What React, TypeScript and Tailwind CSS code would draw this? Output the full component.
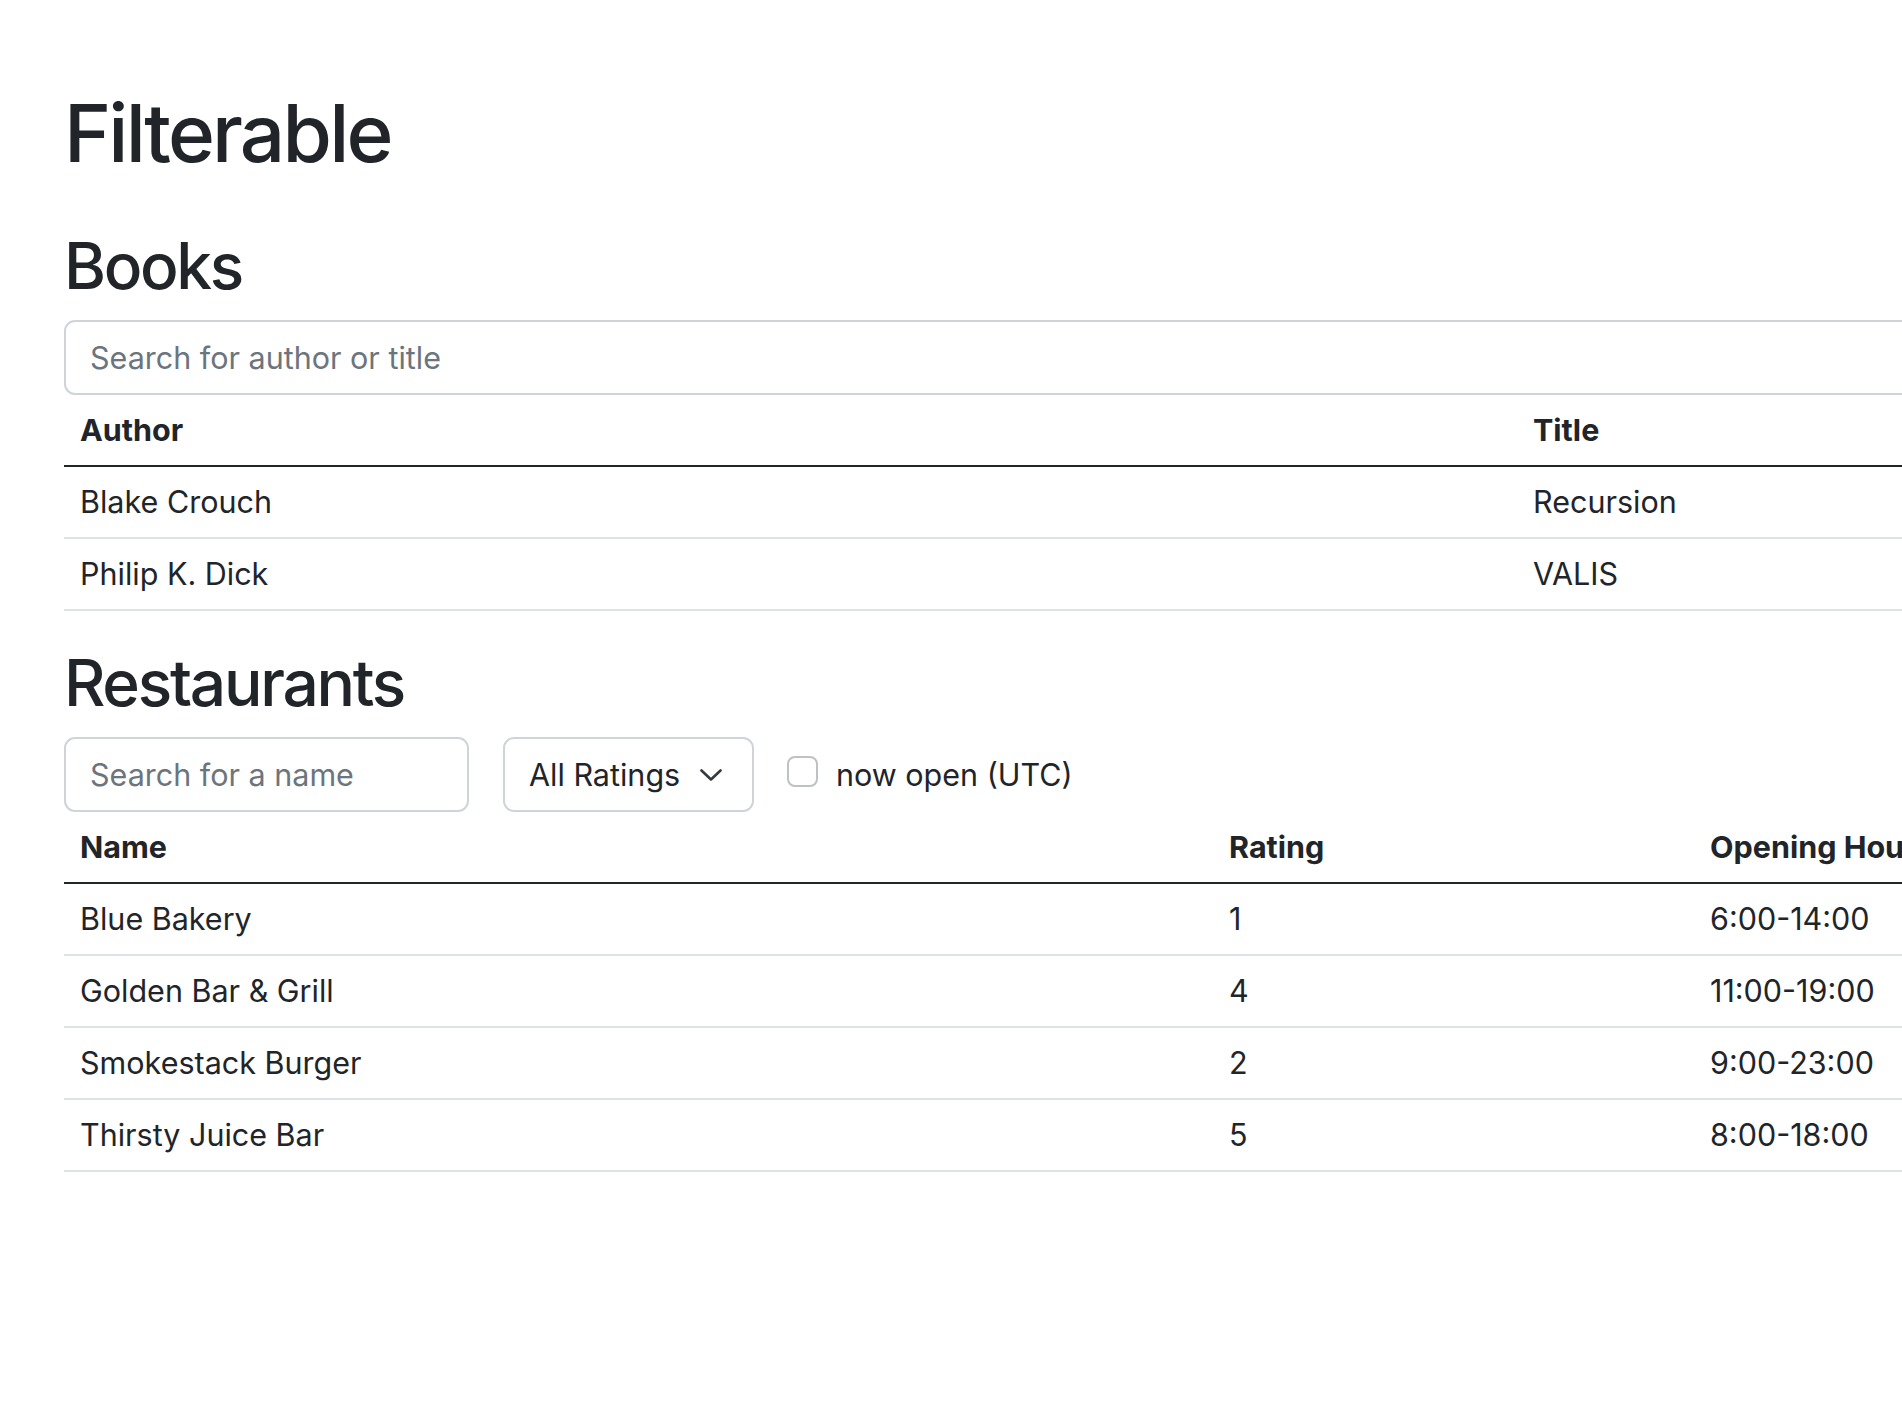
import React, { useState } from 'react';

// Book + restaurant data shown in the filterable tables
const books = [
    { author: 'Blake Crouch', title: 'Recursion' },
    { author: 'Philip K. Dick', title: 'VALIS' },
];

const restaurants = [
    { name: 'Blue Bakery', rating: 1, hours: '6:00-14:00' },
    { name: 'Golden Bar & Grill', rating: 4, hours: '11:00-19:00' },
    { name: 'Smokestack Burger', rating: 2, hours: '9:00-23:00' },
    { name: 'Thirsty Juice Bar', rating: 5, hours: '8:00-18:00' },
];

const thClass = 'text-left font-bold px-4 py-[11px] leading-[48px] border-b-2 border-[#212529]';
const tdClass = 'text-left px-4 py-[11px] leading-[48px] border-b-2 border-[#dee2e6]';

const Chevron: React.FC = () => (
    <svg width="22" height="12" viewBox="0 0 22 12" fill="none" className="shrink-0">
        <path d="M1.5 1.5l9.5 9 9.5-9" stroke="#343a40" strokeWidth="2.6" strokeLinecap="round" strokeLinejoin="round" />
    </svg>
);

const App: React.FC = () => {
    const [query, setQuery] = useState('');
    const [name, setName] = useState('');
    const [nowOpen, setNowOpen] = useState(false);

    return (
        <div className="w-full min-h-screen overflow-hidden bg-white text-[#212529] font-['Inter','Liberation_Sans',sans-serif]">
            <div className="w-[2620px] ml-16 pt-[85px]">
                <h1 className="text-[80px] leading-[96px] font-medium tracking-[-0.035em]">Filterable</h1>

                {/* Books */}
                <h2 className="mt-[46px] mb-4 text-[64px] leading-[77px] font-medium tracking-[-0.037em]">Books</h2>
                <input
                    type="text"
                    value={query}
                    onChange={(e) => setQuery(e.target.value)}
                    placeholder="Search for author or title"
                    className="block w-full h-[75px] px-[24px] text-[30.5px] border-2 border-[#ced4da] rounded-[11px] placeholder:text-[#6c757d] outline-none"
                />
                <table className="w-full text-[30.5px]">
                    <thead>
                        <tr>
                            <th className={`${thClass} w-[1453px]`}>Author</th>
                            <th className={thClass}>Title</th>
                        </tr>
                    </thead>
                    <tbody>
                        {books.map((b) => (
                            <tr key={b.title}>
                                <td className={tdClass}>{b.author}</td>
                                <td className={tdClass}>{b.title}</td>
                            </tr>
                        ))}
                    </tbody>
                </table>

                {/* Restaurants */}
                <h2 className="mt-[33px] mb-4 text-[64px] leading-[77px] font-medium tracking-[-0.035em]">Restaurants</h2>
                <div className="flex items-center">
                    <input
                        type="text"
                        value={name}
                        onChange={(e) => setName(e.target.value)}
                        placeholder="Search for a name"
                        className="block w-[405px] h-[75px] px-[24px] text-[30.5px] border-2 border-[#ced4da] rounded-[11px] placeholder:text-[#6c757d] outline-none"
                    />
                    <button
                        type="button"
                        className="ml-[34px] w-[251px] h-[75px] pl-[24px] pr-[30px] flex items-center justify-between text-[30.5px] border-2 border-[#ced4da] rounded-[11px] bg-white"
                    >
                        <span>All Ratings</span>
                        <Chevron />
                    </button>
                    <label className="ml-[33px] flex items-center cursor-pointer">
                        <span
                            onClick={() => setNowOpen(!nowOpen)}
                            className="w-[31px] h-[31px] -mt-[6px] border-2 border-[#bfc2c5] rounded-[8px] bg-white"
                        />
                        <span className="ml-[18px] text-[30.5px]">now open (UTC)</span>
                    </label>
                </div>
                <table className="w-full text-[30.5px]">
                    <thead>
                        <tr>
                            <th className={`${thClass} w-[1149px]`}>Name</th>
                            <th className={`${thClass} w-[481px]`}>Rating</th>
                            <th className={thClass}>Opening Hours</th>
                        </tr>
                    </thead>
                    <tbody>
                        {restaurants.map((r) => (
                            <tr key={r.name}>
                                <td className={tdClass}>{r.name}</td>
                                <td className={tdClass}>{r.rating}</td>
                                <td className={tdClass}>{r.hours}</td>
                            </tr>
                        ))}
                    </tbody>
                </table>
            </div>
        </div>
    );
};

export default App;
